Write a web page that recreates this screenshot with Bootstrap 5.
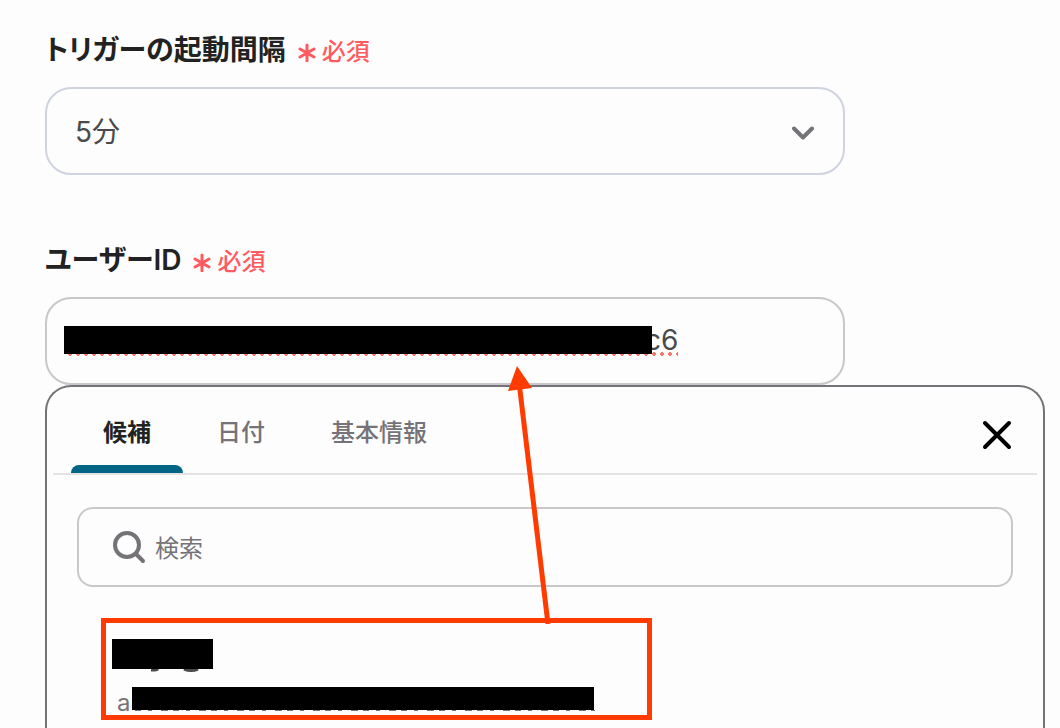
<!DOCTYPE html>
<html lang="ja">
<head>
<meta charset="utf-8">
<meta name="viewport" content="width=device-width, initial-scale=1">
<title>トリガー設定</title>
<link href="https://cdn.jsdelivr.net/npm/bootstrap@5.3.0/dist/css/bootstrap.min.css" rel="stylesheet">
<style>
  body { font-family: Inter, "Noto Sans CJK JP", sans-serif; background: #fdfdfd; color: #222; }
  .page { padding: 32px 15px 0 45px; }
  .field { max-width: 800px; }
  .field + .field { margin-top: 67px; }
  .field-head { height: 36px; margin-bottom: 19px; gap: 12px; }
  .field-head label { font-size: 28px; line-height: 36px; font-weight: 600; font-feature-settings: "palt"; }
  .required { color: #ff5a5f; font-size: 24px; line-height: 36px; font-weight: 500; padding-top: 4px; gap: 6px; }
  .interval { height: 88px; border: 2px solid #cfd3e0; border-radius: 26px; padding: 2px 72px 0 28px; font-size: 28px; color: #4a4a4c;
    background: #fdfdfd url("data:image/svg+xml,%3Csvg xmlns='http://www.w3.org/2000/svg' viewBox='0 0 22 14'%3E%3Cpath d='M2 2.5l9 9 9-9' fill='none' stroke='%23757377' stroke-width='4' stroke-linecap='round' stroke-linejoin='round'/%3E%3C/svg%3E") no-repeat right 29px top 37px / 22px 14px; }
  .user-box { height: 88px; border: 2px solid #c8c7c9; border-radius: 26px; padding: 0 17px 2px; }
  .redact { background: #000; display: block; flex: none; }
  .redact-id { width: 588px; height: 28px; z-index: 1; }
  .spell { height: 4px; width: 612px; left: 2px; bottom: 2px; background: radial-gradient(circle, #ff7566 2px, transparent 2px) 0 0 / 8px 4px; }
  .user-box input { font-size: 28px; line-height: 36px; color: #4a4a4c; margin-left: -7px; min-width: 0; }
  .picker { max-width: 1000px; border: 2px solid #757377; border-bottom: 0; border-radius: 26px 26px 0 0; }
  .tabs { margin: 0 6px; height: 88px; border-bottom: 2px solid #e3e3e3; padding: 0 24px 0 18px; gap: 2px; }
  .tab { height: 86px; padding: 6px 32px 0; border: 0; background: none; font-size: 24px; font-weight: 500; color: #757377; }
  .tab.active { color: #222; font-weight: 700; }
  .tab.active::after { content: ""; position: absolute; left: 0; right: 0; bottom: 0; height: 8px; background: #006485; border-radius: 8px 8px 0 0; }
  .close-x { width: 32px; height: 32px; margin-top: 10px; }
  .search { height: 80px; margin: 32px 30px 0; border: 2px solid #c8c7c9; border-radius: 16px; padding: 0 34px; }
  .search input { font-size: 24px; color: #757377; min-width: 0; }
  .search input.bare { padding-top: 4px; }
  .search input::placeholder { color: #757377; opacity: 1; }
  .choice { width: 551px; height: 102px; margin: 31px 0 0 54px; border: 5px solid #ff3b00; background: none; padding: 16px 6px 5px; color: #757377; font-size: 24px; line-height: 24px; }
  .redact-name { width: 101px; height: 30px; }
  .redact-code { width: 462px; height: 23px; }
  .code-row { padding-left: 5px; gap: 2px; }
  .code-lead { line-height: 14px; }
  .scrap { left: 0; top: 100%; }
  .arrow { left: 400px; bottom: 91px; pointer-events: none; z-index: 2; }
  input.bare { border: 0; background: none; outline: 0; padding: 0; }
</style>
</head>
<body>
<main class="page min-vh-100 d-flex flex-column">
  <div class="field w-100">
    <div class="field-head d-flex align-items-center">
      <label for="interval">トリガーの起動間隔</label>
      <span class="required d-flex align-items-center">
        <svg width="18" height="20" viewBox="0 0 18 20" fill="none" stroke="currentColor" stroke-width="3" stroke-linecap="round" aria-hidden="true"><path d="M9 3v16M2 7l14 8M16 7L2 15"/></svg>必須</span>
    </div>
    <select id="interval" class="interval form-select"><option>5分</option></select>
  </div>

  <div class="field w-100">
    <div class="field-head d-flex align-items-center">
      <label for="user">ユーザーID</label>
      <span class="required d-flex align-items-center">
        <svg width="18" height="20" viewBox="0 0 18 20" fill="none" stroke="currentColor" stroke-width="3" stroke-linecap="round" aria-hidden="true"><path d="M9 3v16M2 7l14 8M16 7L2 15"/></svg>必須</span>
    </div>
    <div class="user-box d-flex align-items-center">
      <div class="position-relative d-flex align-items-center w-100">
        <span class="redact redact-id position-relative"></span>
        <span class="spell position-absolute"></span>
        <input id="user" class="bare flex-grow-1" value="c6">
      </div>
    </div>
  </div>

  <section class="picker w-100 flex-grow-1">
    <div class="tabs d-flex align-items-center">
      <button class="tab active position-relative" type="button">候補</button>
      <button class="tab" type="button">日付</button>
      <button class="tab" type="button">基本情報</button>
      <button class="close-x border-0 bg-transparent p-0 ms-auto d-flex" type="button" aria-label="閉じる">
        <svg width="32" height="32" viewBox="0 0 32 32" fill="none" stroke="#000" stroke-width="4" stroke-linecap="round"><path d="M4 4l24 24M28 4L4 28"/></svg>
      </button>
    </div>
    <div class="search d-flex align-items-center">
      <svg class="flex-shrink-0" width="34" height="34" viewBox="0 0 34 34" fill="none" stroke="#757377" stroke-width="4" stroke-linecap="round" aria-hidden="true"><circle cx="14" cy="15" r="12"/><path d="M23 24l7 7"/></svg>
      <input class="bare flex-grow-1 ms-2" type="search" placeholder="検索" aria-label="検索">
    </div>
    <button class="choice d-flex flex-column justify-content-between position-relative" type="button">
      <span class="redact redact-name position-relative">
        <svg class="scrap position-absolute" width="101" height="4" fill="none" stroke="#4a4a4c" stroke-width="3" aria-hidden="true"><path d="M39 1h4q2 0 3-1M72 0q7 3 14 0"/></svg>
      </span>
      <span class="code-row d-flex align-items-end"><span class="code-lead">a</span>
        <span class="redact redact-code position-relative">
          <svg class="scrap position-absolute" width="464" height="1" stroke="#757377" stroke-width="2" stroke-dasharray="6 7 4 9 7 5" aria-hidden="true"><path d="M3 0h460"/></svg>
        </span>
      </span>
      <svg class="arrow position-absolute" width="54" height="262" viewBox="0 0 54 262" aria-hidden="true"><path d="M42 262L13 20" stroke="#ff3b00" stroke-width="5"/><path d="M11 4l15 22-24 3z" fill="#ff3b00"/></svg>
    </button>
  </section>
</main>
<script src="https://cdn.jsdelivr.net/npm/bootstrap@5.3.0/dist/js/bootstrap.bundle.min.js"></script>
</body>
</html>
